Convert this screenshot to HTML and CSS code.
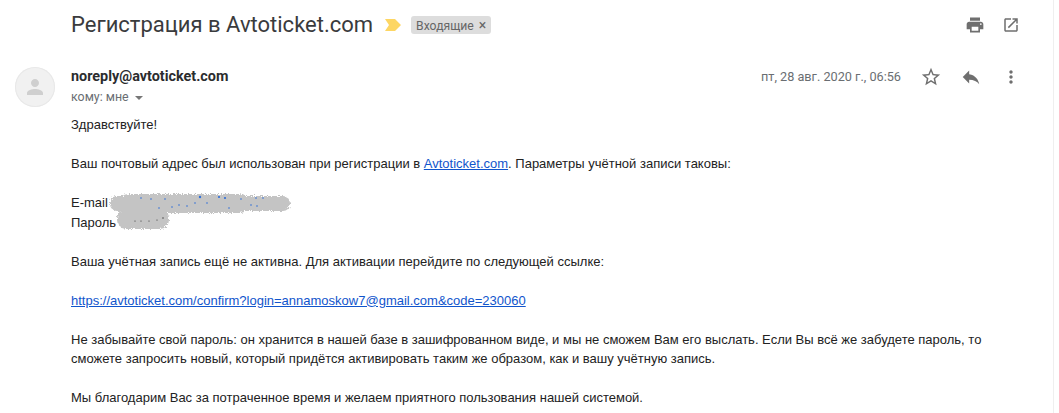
FILE: index.html
```html
<!DOCTYPE html>
<html lang="ru">
<head>
<meta charset="utf-8">
<title>Регистрация в Avtoticket.com</title>
<link rel="stylesheet" href="styles.css">
</head>
<body>
<main class="mail">
  <header class="subject">
    <h1 class="title">Регистрация в Avtoticket.com</h1>
    <svg class="marker" width="16" height="12" viewBox="0 0 16 12"><path d="M0 0h10l6 6-6 6H0l4-6z"/></svg>
    <span class="label">Входящие <span class="label-x">×</span></span>
    <span class="subject-actions">
      <svg class="icon" width="20" height="20" viewBox="0 0 24 24"><path d="M19 8H5c-1.66 0-3 1.34-3 3v6h4v4h12v-4h4v-6c0-1.66-1.34-3-3-3zm-3 11H8v-5h8v5zm3-7c-.55 0-1-.45-1-1s.45-1 1-1 1 .45 1 1-.45 1-1 1zm-1-9H6v4h12V3z"/></svg>
      <svg class="icon" width="18" height="18" viewBox="0 0 24 24"><path d="M19 19H5V5h7V3H5c-1.11 0-2 .9-2 2v14c0 1.1.89 2 2 2h14c1.1 0 2-.9 2-2v-7h-2v7zM14 3v2h3.59l-9.83 9.83 1.41 1.41L19 6.41V10h2V3h-7z"/></svg>
    </span>
  </header>
  <section class="sender">
    <div class="avatar">
      <svg width="24" height="24" viewBox="0 0 24 24"><path d="M12 12c2.21 0 4-1.79 4-4s-1.79-4-4-4-4 1.79-4 4 1.79 4 4 4zm0 2c-2.67 0-8 1.34-8 4v2h16v-2c0-2.66-5.33-4-8-4z"/></svg>
    </div>
    <div class="who">
      <div class="from">noreply@avtoticket.com</div>
      <div class="to">кому: мне <span class="caret"></span></div>
    </div>
    <div class="date">пт, 28 авг. 2020 г., 06:56</div>
    <div class="sender-actions">
      <svg class="icon" width="22" height="22" viewBox="0 0 24 24"><path d="M22 9.24l-7.19-.62L12 2 9.19 8.63 2 9.24l5.46 4.73L5.82 21 12 17.27 18.18 21l-1.63-7.03L22 9.24zM12 15.4l-3.76 2.27 1-4.28-3.32-2.88 4.38-.38L12 6.1l1.71 4.04 4.38.38-3.32 2.88 1 4.28L12 15.4z"/></svg>
      <svg class="icon" width="22" height="22" viewBox="0 0 24 24"><path d="M10 9V5l-7 7 7 7v-4.1c5 0 8.5 1.6 11 5.1-1-5-4-10-11-11z"/></svg>
      <svg class="icon" width="20" height="20" viewBox="0 0 24 24"><path d="M12 8c1.1 0 2-.9 2-2s-.9-2-2-2-2 .9-2 2 .9 2 2 2zm0 2c-1.1 0-2 .9-2 2s.9 2 2 2 2-.9 2-2-.9-2-2-2zm0 6c-1.1 0-2 .9-2 2s.9 2 2 2 2-.9 2-2-.9-2-2-2z"/></svg>
    </div>
  </section>
  <article class="body">
    <p>Здравствуйте!</p>
    <p>Ваш почтовый адрес был использован при регистрации в <a href="#">Avtoticket.com</a>. Параметры учётной записи таковы:</p>
    <p class="creds">
      E-mail<br>
      Пароль
      <svg class="smudge" width="190" height="44" viewBox="0 0 190 44">
        <filter id="grain" x="-5%" y="-20%" width="110%" height="140%"><feTurbulence type="fractalNoise" baseFrequency="0.9" numOctaves="1" result="n"/><feDisplacementMap in="SourceGraphic" in2="n" scale="6"/></filter>
        <g filter="url(#grain)" fill="#c4c4c4">
          <rect x="3" y="5" width="180" height="15" rx="7"/>
          <rect x="12" y="3" width="130" height="19" rx="9"/>
          <rect x="10" y="18" width="52" height="20" rx="9"/>
        </g>
        <g fill="#2f6fd8">
          <circle cx="34" cy="7" r=".8"/><circle cx="44" cy="8" r=".8"/><circle cx="58" cy="8" r=".8"/><circle cx="65" cy="16" r=".8"/><circle cx="52" cy="17" r=".8"/><circle cx="72" cy="14" r=".8"/><circle cx="80" cy="15" r=".8"/><circle cx="93" cy="6" r="1.2"/><circle cx="100" cy="12" r=".8"/><circle cx="88" cy="12" r=".8"/><circle cx="112" cy="6" r="1.1"/><circle cx="118" cy="7" r="1.1"/><circle cx="122" cy="17" r=".8"/><circle cx="134" cy="8" r=".8"/><circle cx="149" cy="7" r=".8"/><circle cx="144" cy="14" r=".8"/><circle cx="156" cy="7" r=".8"/><circle cx="150" cy="15" r=".8"/>
        </g>
        <g fill="#333"><circle cx="28" cy="30" r=".6"/><circle cx="34" cy="30" r=".6"/><circle cx="42" cy="30" r=".6"/><circle cx="50" cy="29" r=".6"/><circle cx="56" cy="27" r=".7"/></g>
      </svg>
    </p>
    <p>Ваша учётная запись ещё не активна. Для активации перейдите по следующей ссылке:</p>
    <p><a href="#">https://avtoticket.com/confirm?login=annamoskow7@gmail.com&amp;code=230060</a></p>
    <p>Не забывайте свой пароль: он хранится в нашей базе в зашифрованном виде, и мы не сможем Вам его выслать. Если Вы всё же забудете пароль, то сможете запросить новый, который придётся активировать таким же образом, как и вашу учётную запись.</p>
    <p>Мы благодарим Вас за потраченное время и желаем приятного пользования нашей системой.</p>
  </article>
</main>
</body>
</html>
```
FILE: styles.css
```css
html, body {
  margin: 0;
  height: 413px;
  overflow: hidden;
  background: #fff;
}
.mail {
  width: 1054px;
  height: 413px;
  box-sizing: border-box;
  border-right: 1px solid #efefef;
  overflow: hidden;
}
.subject {
  display: flex;
  align-items: center;
  height: 50px;
  padding-left: 71px;
  padding-right: 33px;
}
.title {
  margin: 0;
  font: 400 22px/28px Roboto, "Liberation Sans", sans-serif;
  color: #3a3b3d;
}
.marker {
  margin-left: 12px;
  fill: #fdd663;
}
.label {
  margin-left: 10px;
  padding: 0 5px;
  height: 18px;
  border-radius: 3px;
  background: #dddddd;
  color: #666;
  font: 400 12.2px/18px Roboto, "Liberation Sans", sans-serif;
}
.label-x {
  margin-left: 2px;
  font-size: 14px;
}
.subject-actions {
  margin-left: auto;
  display: flex;
  align-items: center;
  gap: 17px;
}
.icon {
  fill: #6f6f6f;
  display: block;
}
.sender {
  display: flex;
  height: 64px;
  padding-left: 15px;
  padding-right: 32px;
}
.avatar {
  width: 40px;
  height: 40px;
  margin-top: 17px;
  border-radius: 50%;
  background: #f1f1f1;
  box-shadow: inset 0 0 0 1px #e8e8e8;
  display: flex;
  align-items: center;
  justify-content: center;
}
.avatar svg {
  fill: #cfcfcf;
}
.who {
  margin-left: 16px;
  padding-top: 18px;
}
.from {
  font: 700 14.4px/18px Roboto, "Liberation Sans", sans-serif;
  color: #2b2c2e;
}
.to {
  margin-top: 3px;
  font: 400 12.4px/16px Roboto, "Liberation Sans", sans-serif;
  color: #6a6e72;
}
.caret {
  display: inline-block;
  margin-left: 3px;
  vertical-align: middle;
  border: 4px solid transparent;
  border-top: 4px solid #777;
  border-bottom: 0;
}
.date {
  margin-left: auto;
  padding-top: 19px;
  font: 400 12.7px/16px Roboto, "Liberation Sans", sans-serif;
  color: #6a6e72;
}
.sender-actions {
  display: flex;
  align-items: center;
  align-self: flex-start;
  margin-top: 16px;
  margin-left: 19px;
  gap: 18px;
}
.sender-actions .icon:nth-child(2) {
  margin-right: 1px;
}
.body {
  padding-left: 71px;
  padding-right: 40px;
  margin-top: 1px;
  font: 400 13px/19.5px "Liberation Sans", Arial, sans-serif;
  color: #222;
}
.body p {
  margin: 0 0 19.5px;
}
.body a {
  color: #1155cc;
}
.creds {
  position: relative;
}
.smudge {
  position: absolute;
  left: 36px;
  top: -2px;
}
```
